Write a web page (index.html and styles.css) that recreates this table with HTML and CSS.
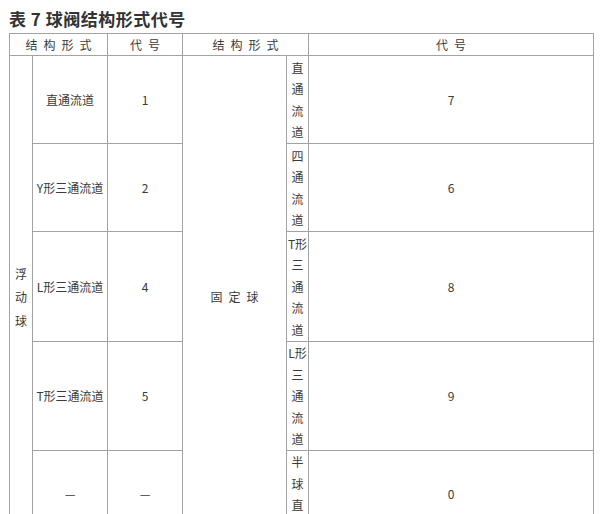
FILE: index.html
```html
<!DOCTYPE html>
<html lang="zh">
<head>
<meta charset="utf-8">
<link rel="stylesheet" href="styles.css">
</head>
<body>
<div class="page">
  <h1 class="title">表 7 球阀结构形式代号</h1>
  <table class="spec">
    <colgroup>
      <col class="c1"><col class="c2"><col class="c3"><col class="c4"><col class="c5"><col class="c6">
    </colgroup>
    <tr class="r-head">
      <th colspan="2" class="sp">结构形式</th>
      <th class="sp">代号</th>
      <th colspan="2" class="sp">结构形式</th>
      <th class="sp">代号</th>
    </tr>
    <tr class="r88">
      <td rowspan="5" class="vert">浮动球</td>
      <td>直通流道</td>
      <td>1</td>
      <td rowspan="5" class="sp">固定球</td>
      <td class="narrow">直通流道</td>
      <td>7</td>
    </tr>
    <tr class="r88">
      <td>Y形三通流道</td>
      <td>2</td>
      <td class="narrow">四通流道</td>
      <td>6</td>
    </tr>
    <tr class="r110">
      <td>L形三通流道</td>
      <td>4</td>
      <td class="narrow">T形三通流道</td>
      <td>8</td>
    </tr>
    <tr class="r108">
      <td>T形三通流道</td>
      <td>5</td>
      <td class="narrow">L形三通流道</td>
      <td>9</td>
    </tr>
    <tr class="r88">
      <td>—</td>
      <td>—</td>
      <td class="narrow">半球直通</td>
      <td>0</td>
    </tr>
  </table>
</div>
</body>
</html>
```
FILE: styles.css
```css
html, body {
  margin: 0;
  padding: 0;
  background: #ffffff;
}
.page {
  padding: 0 8px 0 9px;
  font-family: "Noto Sans CJK SC", "Noto Sans", sans-serif;
  color: #333;
}
.title {
  margin: 0;
  height: 33px;
  line-height: 37px;
  font-size: 17px;
  font-weight: bold;
  color: #333;
  letter-spacing: 0.5px;
}
.spec {
  border-collapse: collapse;
  table-layout: fixed;
  width: 584px;
  font-size: 12px;
}
.c1 { width: 23px; }
.c2 { width: 75px; }
.c3 { width: 75px; }
.c4 { width: 104px; }
.c5 { width: 22px; }
.c6 { width: 285px; }
.spec th, .spec td {
  border: 1px solid #a3a3a3;
  padding: 0 2px;
  text-align: center;
  vertical-align: middle;
  font-weight: normal;
  color: #3a3a3a;
  line-height: 20px;
}
.r-head { height: 22px; }
.r-head th { padding: 0; }
.r88 { height: 88px; }
.r110 { height: 110px; }
.r108 { height: 108px; }
.sp { letter-spacing: 6px; text-indent: 6px; }
.spec .vert {
  padding: 0 5px;
  line-height: 23.5px;
  word-break: break-all;
}
.spec .narrow {
  padding: 0;
  line-height: 21.5px;
  word-break: break-all;
}
```
